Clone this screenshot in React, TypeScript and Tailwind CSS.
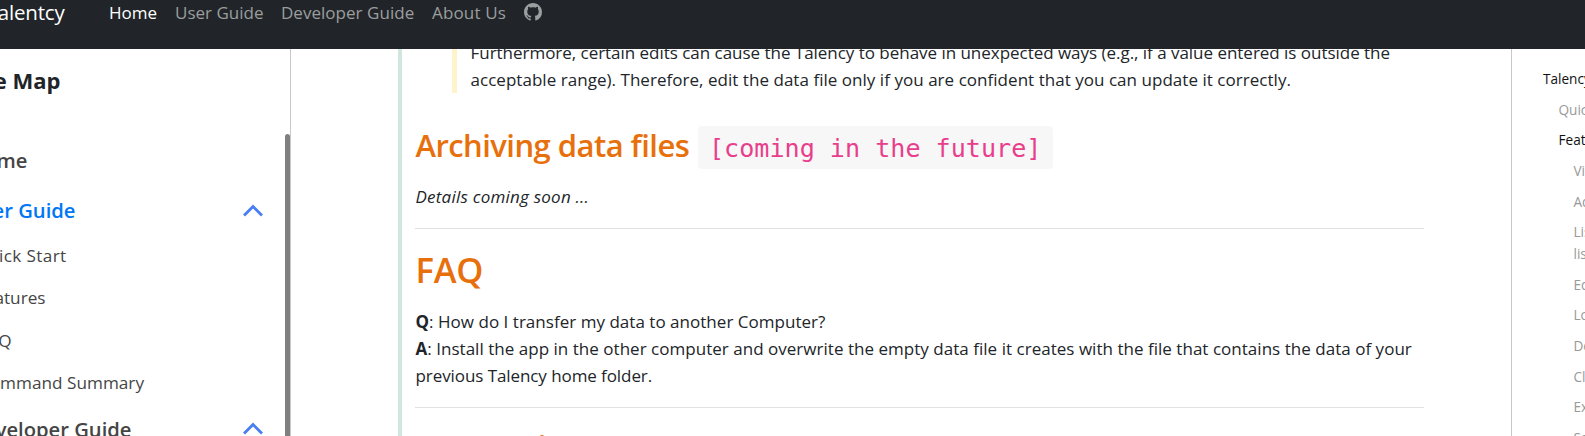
import React from "react";
import { BsGithub } from "react-icons/bs";

function Chevron() {
  return (
    <svg viewBox="0 0 20 13" className="h-[13px] w-5 shrink-0" fill="none" stroke="#4a7ff2" strokeWidth="3">
      <path d="M1 11.5 L10 2.5 L19 11.5" />
    </svg>
  );
}

function Header() {
  return (
    <header className="flex h-[49px] shrink-0 items-start overflow-hidden bg-[#212529] text-[17px] leading-[26px] text-[#9b9d9e]">
      <div className="flex w-[64.5px] shrink-0 justify-end text-[20.5px] leading-[24px] tracking-[-0.2px] text-white">
        <span>Talentcy</span>
      </div>
      <nav className="ml-[44.5px] flex whitespace-nowrap">
        <a className="w-[66px] text-white">Home</a>
        <a className="w-[106px]">User Guide</a>
        <a className="w-[151px] tracking-[0.03px]">Developer Guide</a>
        <a className="w-[92px] tracking-[0.15px]">About Us</a>
        <a className="pt-[3px]">
          <BsGithub className="h-[18px] w-[18px]" />
        </a>
      </nav>
    </header>
  );
}

function SideSection({ label, color, width }: { label: string; color: string; width: string }) {
  return (
    <div className="flex h-[30px] items-center">
      <div className={`flex shrink-0 justify-end ${width} ${color}`}>
        <span>{label}</span>
      </div>
      <div className="flex grow justify-end pr-[27px]">
        <Chevron />
      </div>
    </div>
  );
}

function SidePage({ label, width }: { label: string; width: string }) {
  return (
    <li className={`flex justify-end ${width}`}>
      <span>{label}</span>
    </li>
  );
}

function SiteMap() {
  return (
    <aside className="relative h-full w-[291px] shrink-0 overflow-hidden whitespace-nowrap border-r border-[#c8c8c8] pt-4 text-[20.2px] font-semibold leading-[30px] text-[#454545]">
      <div className="flex w-[60.5px] justify-end text-[22px] font-bold text-[#212529]">
        <span>Site Map</span>
      </div>
      <div className="mt-[50px] flex w-[27.5px] justify-end">
        <span>Home</span>
      </div>
      <div className="mt-5">
        <SideSection label="User Guide" color="text-[#0077f5]" width="w-[75.5px]" />
      </div>
      <ul className="mt-[17px] flex flex-col gap-[15.3px] text-[17.2px] font-normal leading-[27px]">
        <li className="flex w-[66.5px] justify-end tracking-[0.35px]">
          <span>Quick Start</span>
        </li>
        <SidePage label="Features" width="w-[45.5px]" />
        <SidePage label="FAQ" width="w-[11.5px]" />
        <SidePage label="Command Summary" width="w-[144px]" />
      </ul>
      <div className="mt-[18px]">
        <SideSection label="Developer Guide" color="text-[#454545]" width="w-[131.5px]" />
      </div>
      <div className="absolute right-0 top-[85px] h-[400px] w-[5px] rounded-t-full bg-[#808080]" />
    </aside>
  );
}

function Article() {
  return (
    <main className="ml-[107px] h-full w-[1026px] shrink-0 overflow-hidden whitespace-nowrap border-l-4 border-[#d1e7dd] pl-[13px] text-[17px] leading-[27px] text-[#212529]">
      <div className="-mt-[10px] ml-[37px] h-[54px] border-l-[5px] border-[#fff3cd] pl-[13.5px]">
        <p className="tracking-[-0.028px]">
          Furthermore, certain edits can cause the Talency to behave in unexpected ways (e.g., if a value entered is outside the
        </p>
        <p className="tracking-[0.035px]">
          acceptable range). Therefore, edit the data file only if you are confident that you can update it correctly.
        </p>
      </div>
      <h2 className="mt-[33px] flex h-[43px] items-start text-[31px] font-semibold leading-[38px] tracking-[-0.55px] text-[#e8700c]">
        <span className="w-[283px] pl-[0.5px]">Archiving data files</span>
        <code className="h-[43px] w-[355px] rounded-[4px] bg-[#f7f7f7] pl-[11px] font-['DejaVu_Sans_Mono'] text-[25.1px] font-normal leading-[46px] tracking-normal text-[#e83e8c]">
          [coming in the future]
        </code>
      </h2>
      <p className="mt-[14px] pl-[0.5px] italic tracking-[0.23px]">Details coming soon ...</p>
      <hr className="mt-[18px] w-[1009px] border-[#e0e1e2]" />
      <h1 className="mt-[19px] pl-[0.5px] text-[34.5px] font-semibold leading-[44px] tracking-[-0.2px] text-[#e8700c]">FAQ</h1>
      <p className="mt-4 pl-[0.5px] tracking-[0.027px]">
        <b>Q</b>: How do I transfer my data to another Computer?
        <br />
        <b>A</b>: Install the app in the other computer and overwrite the empty data file it creates with the file that contains the data of your
        <br />
        <span className="tracking-[-0.08px]">previous Talency home folder.</span>
      </p>
      <hr className="mt-[18px] w-[1009px] border-[#e0e1e2]" />
      <h1 className="mt-[18px] text-[34px] font-semibold leading-[45px] text-[#e8700c]">Known issues</h1>
    </main>
  );
}

const featureLinks = [
  "Viewing help",
  "Adding a person",
];

const laterLinks = [
  "Editing a person",
  "Locating persons",
  "Deleting a person",
  "Clearing all entries",
  "Exiting the program",
  "Saving the data",
];

function PageNav() {
  return (
    <aside className="ml-[87px] h-full grow overflow-hidden whitespace-nowrap border-l border-[#c8c8c8] pt-[19px] text-[13.6px] leading-[21.6px] text-[#999999]">
      <ul className="flex flex-col gap-[9.1px]">
        <li className="ml-[31px] text-[#111111]">Talency User Guide</li>
        <li className="ml-[46.5px]">Quick Start</li>
        <li className="ml-[46.5px] text-[#111111]">Features</li>
        {featureLinks.map((label) => (
          <li key={label} className="ml-[61.5px]">{label}</li>
        ))}
        <li className="ml-[61.5px]">
          Listing all persons:
          <br />
          list
        </li>
        {laterLinks.map((label) => (
          <li key={label} className="ml-[61.5px]">{label}</li>
        ))}
      </ul>
    </aside>
  );
}

export default function App() {
  return (
    <div className="flex h-[436px] w-[1585px] flex-col overflow-hidden bg-white font-['Open_Sans',sans-serif]">
      <Header />
      <div className="flex min-h-0 grow">
        <SiteMap />
        <Article />
        <PageNav />
      </div>
    </div>
  );
}
